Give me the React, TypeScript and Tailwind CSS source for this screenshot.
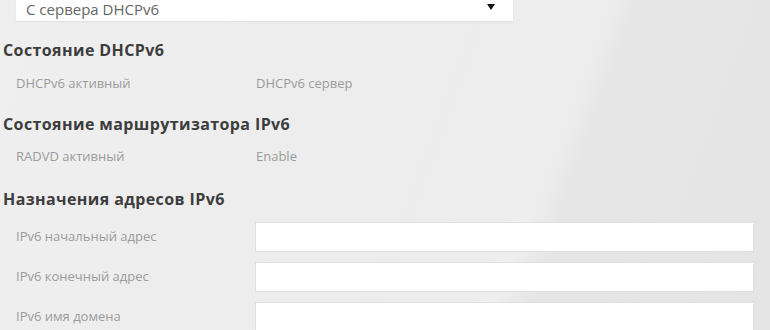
const font = { fontFamily: '"Open Sans", "Noto Sans", sans-serif' };

function InfoRow({ label, value }: { label: string; value: string }) {
  return (
    <div className="flex h-5 items-center text-[13px] text-[#9b9b9b]">
      <div className="w-[256px] pl-4">{label}</div>
      <div>{value}</div>
    </div>
  );
}

function InputRow({ label }: { label: string }) {
  return (
    <div className="flex h-[30px] items-center">
      <div className="w-[255px] pl-4 text-[13px] text-[#9b9b9b]">{label}</div>
      <div className="h-[30px] w-[499px] border border-[#e0e0e0] bg-white" />
    </div>
  );
}

export default function App() {
  return (
    <div
      className="h-[330px] w-[770px] overflow-hidden bg-[linear-gradient(110deg,#efefef_0%,#ececec_55%,#eeeeee_68%,#e6e6e6_72%,#e4e4e4_100%)]"
      style={font}
    >
      {/* Select */}
      <div className="-mt-[9px] ml-4 flex h-[30px] w-[497px] items-center justify-between bg-white pl-[10px] pr-[18px] shadow-[0_1px_2px_rgba(0,0,0,0.06)]">
        <span className="pt-[5px] text-[15px] leading-[16px] text-[#666]">С сервера DHCPv6</span>
        <span className="mt-[1px] h-0 w-0 border-x-[4px] border-t-[6px] border-x-transparent border-t-[#111]" />
      </div>

      <h2 className="mt-[17px] flex h-6 items-center pl-[3px] text-[16px] font-bold tracking-[0.4px] text-[#3d3d3d]">
        Состояние DHCPv6
      </h2>
      <div className="mt-3">
        <InfoRow label="DHCPv6 активный" value="DHCPv6 сервер" />
      </div>

      <h2 className="mt-[18px] flex h-6 items-center pl-[3px] text-[16px] font-bold tracking-[0.4px] text-[#3d3d3d]">
        Состояние маршрутизатора IPv6
      </h2>
      <div className="mt-[11px]">
        <InfoRow label="RADVD активный" value="Enable" />
      </div>

      <h2 className="mt-5 flex h-6 items-center pl-[3px] text-[16px] font-bold tracking-[0.4px] text-[#3d3d3d]">
        Назначения адресов IPv6
      </h2>
      <div className="mt-[11px] flex flex-col gap-[10px]">
        <InputRow label="IPv6 начальный адрес" />
        <InputRow label="IPv6 конечный адрес" />
        <InputRow label="IPv6 имя домена" />
      </div>
    </div>
  );
}
